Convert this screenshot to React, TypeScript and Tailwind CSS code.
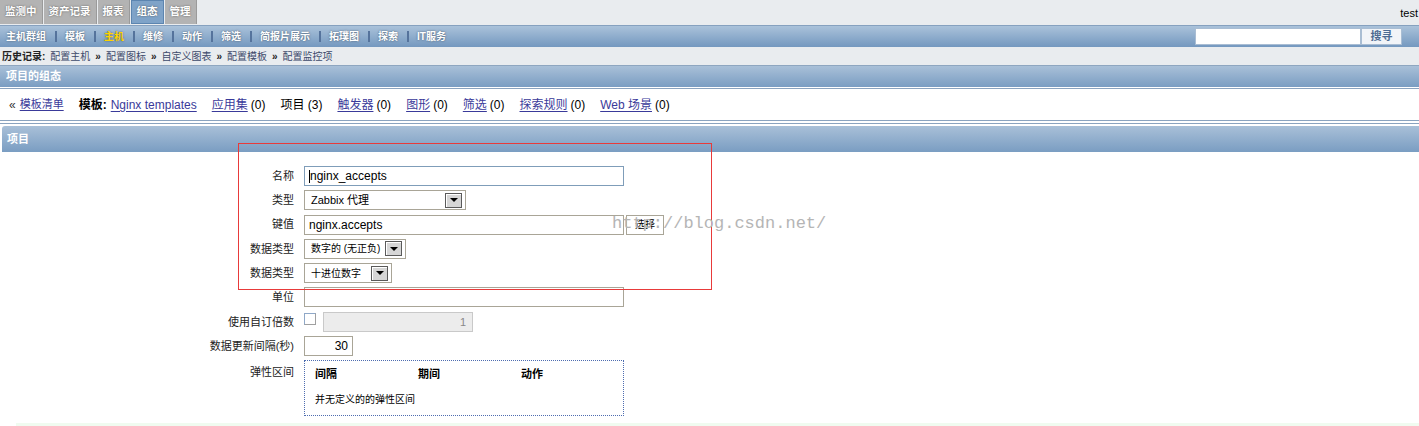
import React from "react";

const F = "font-['Liberation_Sans','Noto_Sans_CJK_SC',sans-serif]";

function Arrow() {
  return (
    <span className="flex items-center justify-center w-[17px] h-[15px] border border-[#5a5a5a] bg-[#d6d6d6] shadow-[inset_1px_1px_0_#fff]">
      <span className="w-0 h-0 border-l-[4px] border-r-[4px] border-t-[4px] border-l-transparent border-r-transparent border-t-black" />
    </span>
  );
}

function Select({ w, text, size }: { w: string; text: string; size: string }) {
  return (
    <div className={`${w} h-[20px] border border-[#a9a597] bg-white flex items-center justify-between pl-[6px] pr-[3px] ${size} text-black`}>
      <span className="whitespace-nowrap">{text}</span>
      <Arrow />
    </div>
  );
}

export default function App() {
  const tabs = ["监测中", "资产记录", "报表", "组态", "管理"];
  const nav = ["主机群组", "模板", "主机", "维修", "动作", "筛选", "简报片展示", "拓璞图", "探索", "IT服务"];
  const hist = ["配置主机", "配置图标", "自定义图表", "配置模板", "配置监控项"];
  const labelCls = "flex items-center justify-end h-[20px] text-[11px] text-[#222] whitespace-nowrap";
  const link = "text-[#3a3a9a] underline underline-offset-2";
  return (
    <div className={`relative w-[1419px] h-[426px] overflow-hidden bg-white ${F}`}>
      {/* top tab bar */}
      <div className="flex items-start justify-between h-[25px] bg-[#e9ecef]">
        <div className="flex h-[24px]">
          {tabs.map((t, i) => (
            <div
              key={t}
              className={`h-[24px] flex items-center px-[5px] mr-[1px] text-[10.5px] font-bold text-white [text-shadow:0_0_2px_#555] ${
                i === 3 ? "bg-[#7fa3c8] border border-[#5c85b0]" : "bg-[#b3b3b3] border-r border-[#9a9a9a]"
              }`}
            >
              {t}
            </div>
          ))}
        </div>
        <div className="text-[11px] text-black pt-[5px] pr-[1px]">test</div>
      </div>

      {/* nav bar */}
      <div className="flex items-center justify-between h-[22px] border-t border-[#86a1bf] bg-gradient-to-b from-[#aac2da] to-[#7498bf]">
        <div className="flex items-center pl-[6px] text-[10px] font-bold">
          {nav.map((n, i) => (
            <React.Fragment key={n}>
              {i > 0 && <span className="w-[2px] h-[11px] mx-[8.5px] bg-[#55739c]" />}
              <span className={`${i === 2 ? "text-[#ffd400]" : "text-white"} [text-shadow:0_0_2px_#456]`}>{n}</span>
            </React.Fragment>
          ))}
        </div>
        <div className="flex items-center pr-[17px]">
          <div className="w-[166px] h-[17px] bg-white border border-[#a9bdd3]" />
          <div className="w-[41px] h-[17px] flex items-center justify-center bg-[#f1f4f8] border border-[#a9bdd3] text-[11px] font-bold text-[#4d6b92]">
            搜寻
          </div>
        </div>
      </div>

      {/* history */}
      <div className="flex items-center h-[19px] bg-[#e9ecef] pl-[2px] text-[10px] text-[#3d4a6b] border-b border-[#8ea6c0]">
        <span className="font-bold text-[#222] mr-[5px]">历史记录:</span>
        {hist.map((h, i) => (
          <React.Fragment key={h}>
            {i > 0 && <span className="font-bold text-[#222] mx-[5px]">»</span>}
            <span>{h}</span>
          </React.Fragment>
        ))}
      </div>

      {/* header 1 */}
      <div className="h-[21px] flex items-center pl-[6px] bg-gradient-to-b from-[#a9c0d8] to-[#7a9dc2] text-[11px] font-bold text-white">
        项目的组态
      </div>
      <div className="h-[1px] bg-white" />
      <div className="h-[1px] bg-[#8aa3bf]" />

      {/* links row */}
      <div className="h-[31px] flex items-center pl-[9px] text-[12px] text-black whitespace-nowrap">
        <span className="mr-[4px] text-[#333]">«</span>
        <span className={`${link} mr-[15px] text-[11px]`}>模板清单</span>
        <span className="font-bold mr-[4px]">模板:</span>
        <span className={`${link} mr-[15px]`}>Nginx templates</span>
        <span className={link}>应用集</span>
        <span className="ml-[3px] mr-[15px]">(0)</span>
        <span className="mr-[15px]">项目 (3)</span>
        <span className={link}>触发器</span>
        <span className="ml-[3px] mr-[15px]">(0)</span>
        <span className={link}>图形</span>
        <span className="ml-[3px] mr-[15px]">(0)</span>
        <span className={link}>筛选</span>
        <span className="ml-[3px] mr-[15px]">(0)</span>
        <span className={link}>探索规则</span>
        <span className="ml-[3px] mr-[15px]">(0)</span>
        <span className={link}>Web 场景</span>
        <span className="ml-[3px]">(0)</span>
      </div>
      <div className="h-[1px] bg-[#8aa3bf]" />
      <div className="h-[2px] bg-white" />
      <div className="h-[1px] bg-[#8aa3bf]" />
      <div className="h-[2px] bg-white" />

      {/* header 2 */}
      <div className="ml-[2px] h-[26px] flex items-center pl-[5px] rounded-tl-[3px] bg-gradient-to-b from-[#a9c0d8] to-[#7a9dc2] text-[11px] font-bold text-white">
        项目
      </div>

      {/* form */}
      <div className="grid grid-cols-[294px_1fr] gap-x-[10px] gap-y-[4.3px] pt-[14px]">
        <div className={labelCls}>名称</div>
        <div className="w-[320px] h-[20px] border border-[#7f9db9] flex items-center pl-[4px] text-[12px] text-black">
          <span className="w-[1px] h-[13px] bg-black" />
          nginx_accepts
        </div>

        <div className={labelCls}>类型</div>
        <Select w="w-[162px]" text="Zabbix 代理" size="text-[11px]" />

        <div className={labelCls}>键值</div>
        <div className="flex items-center gap-[2px]">
          <div className="w-[320px] h-[20px] border border-[#a9a597] flex items-center pl-[4px] text-[12px] text-black">
            nginx.accepts
          </div>
          <div className="w-[38px] h-[20px] border border-[#a9a597] flex items-center justify-center text-[10px] text-black">
            选择
          </div>
        </div>

        <div className={labelCls}>数据类型</div>
        <Select w="w-[102px]" text="数字的 (无正负)" size="text-[10px]" />

        <div className={labelCls}>数据类型</div>
        <Select w="w-[88px]" text="十进位数字" size="text-[10px]" />

        <div className={labelCls}>单位</div>
        <div className="w-[320px] h-[20px] border border-[#a9a597]" />

        <div className={labelCls}>使用自订倍数</div>
        <div className="flex items-start h-[20px]">
          <div className="mt-[1px] w-[12px] h-[12px] border border-[#a0a0a0] border-l-[#8fa8c8] border-t-[#8fa8c8] bg-white" />
          <div className="ml-[7px] w-[150px] h-[20px] border border-[#c9c9c9] bg-[#ececec] flex items-center justify-end pr-[6px] text-[11px] text-[#888]">
            1
          </div>
        </div>

        <div className={labelCls}>数据更新间隔(秒)</div>
        <div className="w-[49px] h-[20px] border border-[#a9a597] flex items-center justify-end pr-[4px] text-[12px] text-black">
          30
        </div>

        <div className="flex justify-end pt-[4px] text-[11px] text-[#222] h-[20px]">弹性区间</div>
        <div className="w-[320px] h-[56px] border border-dotted border-[#4e6db0] pl-[10px] pt-[5px] text-[11px] text-black">
          <div className="flex font-bold">
            <span className="w-[103px]">间隔</span>
            <span className="w-[103px]">期间</span>
            <span>动作</span>
          </div>
          <div className="mt-[9px] text-[10px]">并无定义的的弹性区间</div>
        </div>
      </div>

      <div className="ml-[16px] mt-[7px] h-[10px] bg-[#f0fbf0]" />

      {/* overlays */}
      <div className="absolute left-[238px] top-[143px] w-[474px] h-[147px] border border-[#e83a3a] pointer-events-none" />
      <div className="absolute left-[612px] top-[213px] h-[22px] flex items-center text-[17px] text-[#b5b5b5] font-['Liberation_Mono',monospace] pointer-events-none whitespace-nowrap">
        http://blog.csdn.net/
      </div>
    </div>
  );
}
